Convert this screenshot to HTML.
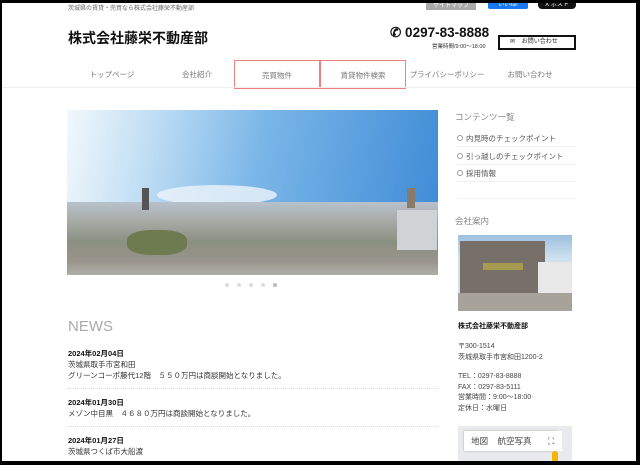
<!DOCTYPE html>
<html><head><meta charset="utf-8"><style>
*{margin:0;padding:0;box-sizing:border-box}
body{width:640px;height:465px;background:#000;font-family:"Liberation Sans","Noto Sans CJK JP",sans-serif;overflow:hidden;position:relative}
#pg{position:absolute;left:2px;top:3px;width:634px;height:458px;background:#fff;overflow:hidden}
.a{position:absolute;white-space:nowrap}
.nav{position:absolute;top:57px;height:30px;font-size:7.5px;color:#777;text-align:center;line-height:30px}
.li{position:absolute;left:455px;width:119px;border-bottom:1px solid #eee;font-size:7.5px;color:#555;height:17px;line-height:17px}
.li:before{content:"";display:inline-block;width:4px;height:4px;border:1.3px solid #999;border-radius:50%;margin-right:3px;vertical-align:0}
.nd{font-size:7.5px;font-weight:bold;color:#111}
.nt{font-size:7.5px;color:#333}
</style></head><body><div id="pg">
<div class="a" style="left:66px;top:0;font-size:6px;color:#666">茨城県の賃貸・売買なら株式会社藤栄不動産部</div>
<div class="a" style="left:424px;top:-3px;width:50px;height:10px;background:#aaa;color:#fff;font-size:6px;text-align:center;line-height:12px">サイトマップ</div>
<div class="a" style="left:486px;top:-3px;width:40px;height:9px;background:#1877f2;border-radius:2px;color:#fff;font-size:6px;text-align:center;line-height:11px">いいね!</div>
<div class="a" style="left:536px;top:-3px;width:38px;height:9px;background:#111;border-radius:4px;color:#fff;font-size:6px;text-align:center;line-height:11px">X ポスト</div>
<div class="a" style="left:66px;top:25px;font-size:14px;font-weight:bold;color:#111">株式会社藤栄不動産部</div>
<div class="a" style="left:388px;top:22px;font-size:13.5px;font-weight:bold;color:#111">✆ 0297-83-8888</div>
<div class="a" style="left:430px;top:39px;font-size:5.5px;color:#333">営業時間/9:00〜18:00</div>
<div class="a" style="left:496px;top:32px;width:78px;height:15px;border:2px solid #111;font-size:6px;color:#222;line-height:11px;padding-left:10px">✉&nbsp;&nbsp;&nbsp;&nbsp;お問い合わせ</div>
<div class="nav" style="left:80px;width:60px">トップページ</div>
<div class="nav" style="left:165px;width:60px">会社紹介</div>
<div class="nav" style="left:232px;width:86px;border:1px solid #f08080;height:29px">売買物件</div>
<div class="nav" style="left:318px;width:86px;border:1px solid #f08080;height:29px">賃貸物件検索</div>
<div class="nav" style="left:405px;width:80px">プライバシーポリシー</div>
<div class="nav" style="left:498px;width:60px">お問い合わせ</div>
<div class="a" style="left:0;top:84px;width:634px;height:1px;background:#eee"></div>
<div class="a" style="left:65px;top:107px;width:371px;height:165px;overflow:hidden;background:linear-gradient(100deg,#f2f8fc 0%,#c4e0f5 20%,#7ab6e8 50%,#3d8ad6 100%)">
<div class="a" style="left:90px;top:75px;width:120px;height:20px;border-radius:50%;background:#eef4fa;opacity:.8"></div>
<div class="a" style="left:0;top:92px;width:371px;height:73px;background:linear-gradient(#b8c2cc,#a8aca8 25%,#8a9080 55%,#98948c 80%,#b0aca8)"></div>
<div class="a" style="left:75px;top:78px;width:7px;height:22px;background:#555"></div>
<div class="a" style="left:340px;top:78px;width:8px;height:20px;background:#8a7a6a"></div>
<div class="a" style="left:330px;top:100px;width:40px;height:40px;background:#cfd3d6"></div>
<div class="a" style="left:60px;top:120px;width:60px;height:25px;background:#6e7a50;border-radius:40%"></div>
</div>
<div class="a" style="left:223px;top:280px;width:60px;height:5px;font-size:0">
<span style="display:inline-block;width:4px;height:4px;border-radius:50%;background:#ddd;margin-right:8px"></span><span style="display:inline-block;width:4px;height:4px;border-radius:50%;background:#ddd;margin-right:8px"></span><span style="display:inline-block;width:4px;height:4px;border-radius:50%;background:#ddd;margin-right:8px"></span><span style="display:inline-block;width:4px;height:4px;border-radius:50%;background:#ddd;margin-right:8px"></span><span style="display:inline-block;width:4px;height:4px;border-radius:50%;background:#bbb"></span></div>
<div class="a" style="left:66px;top:315px;font-size:15px;color:#aaa">NEWS</div>
<div class="a nd" style="left:66px;top:345px">2024年02月04日</div>
<div class="a nt" style="left:66px;top:356px">茨城県取手市宮和田</div>
<div class="a nt" style="left:66px;top:367px">グリーンコーポ藤代12階　５５０万円は商談開始となりました。</div>
<div class="a" style="left:66px;top:385px;width:370px;border-top:1px dotted #ddd"></div>
<div class="a nd" style="left:66px;top:394px">2024年01月30日</div>
<div class="a nt" style="left:66px;top:405px">メゾン中目黒　４６８０万円は商談開始となりました。</div>
<div class="a" style="left:66px;top:423px;width:370px;border-top:1px dotted #ddd"></div>
<div class="a nd" style="left:66px;top:432px">2024年01月27日</div>
<div class="a nt" style="left:66px;top:443px">茨城県つくば市大船渡</div>
<div class="a" style="left:453px;top:108px;font-size:8.5px;color:#888">コンテンツ一覧</div>
<div class="li" style="top:127px">内見時のチェックポイント</div>
<div class="li" style="top:145px">引っ越しのチェックポイント</div>
<div class="li" style="top:162px">採用情報</div>
<div class="a" style="left:455px;top:195px;width:119px;height:1px;background:#f0f0f0"></div>
<div class="a" style="left:453px;top:212px;font-size:8.5px;color:#888">会社案内</div>
<div class="a" style="left:456px;top:232px;width:114px;height:76px;overflow:hidden;background:linear-gradient(#9cc0e0,#cfe0ee 30%)">
<div class="a" style="left:2px;top:6px;width:85px;height:54px;background:#777068"></div>
<div class="a" style="left:80px;top:27px;width:34px;height:33px;background:#e8e8e8"></div>
<div class="a" style="left:25px;top:28px;width:40px;height:7px;background:#a59a50"></div>
<div class="a" style="left:0;top:58px;width:114px;height:18px;background:#a8a39a"></div>
</div>
<div class="a" style="left:456px;top:318px;font-size:7px;font-weight:bold;color:#111">株式会社藤栄不動産部</div>
<div class="a" style="left:456px;top:338px;font-size:7px;color:#444;line-height:11px">〒300-1514<br>茨城県取手市宮和田1200-2</div>
<div class="a" style="left:456px;top:369px;font-size:7px;color:#444;line-height:10.7px">TEL：0297-83-8888<br>FAX：0297-83-5111<br>営業時間：9:00〜18:00<br>定休日：水曜日</div>
<div class="a" style="left:456px;top:423px;width:114px;height:40px;background:#e8eaed"></div>
<div class="a" style="left:462px;top:428px;width:93px;height:20px;background:#fff;box-shadow:0 0 2px #aaa;font-size:8.5px;color:#444;line-height:20px">&nbsp;&nbsp;&nbsp;地図&nbsp;&nbsp;&nbsp;&nbsp;航空写真</div>
<div class="a" style="left:546px;top:428px;width:14px;height:20px;background:#fff;font-size:9px;color:#444;line-height:20px">⛶</div>
<div class="a" style="left:550px;top:448px;width:6px;height:12px;background:#f4b400;border-radius:3px"></div>
</div></body></html>
